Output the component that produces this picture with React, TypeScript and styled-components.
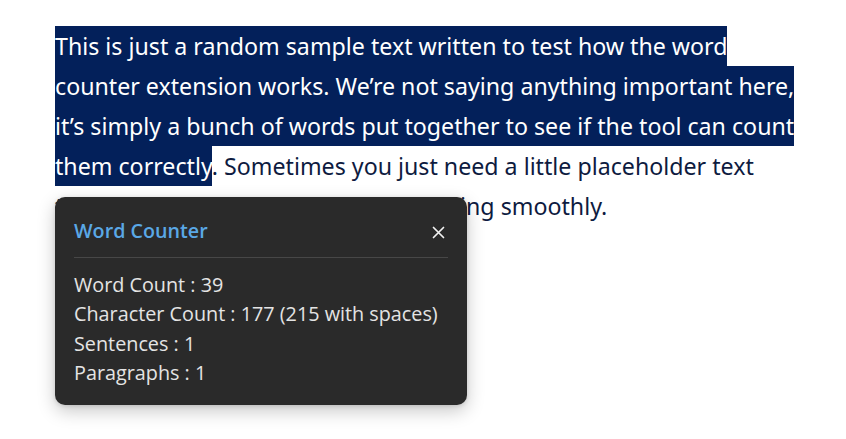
import React from 'react';
import styled, {createGlobalStyle} from "styled-components";

const GlobalStyle = createGlobalStyle`
    html, body {
        margin: 0;
        padding: 0;
        background: #ffffff;
    }
`

type StatType = {
    label: string
    value: string
}

const stats: StatType[] = [
    {label: 'Word Count', value: '39'},
    {label: 'Character Count', value: '177 (215 with spaces)'},
    {label: 'Sentences', value: '1'},
    {label: 'Paragraphs', value: '1'},
]

export default function App() {
    return (
        <>
            <GlobalStyle/>
            <StyledPage>
                <StyledText>
                    <StyledSelection>This is just a random sample text written to test how the word </StyledSelection><br/>
                    <StyledSelection>counter extension works. We’re not saying anything important here, </StyledSelection><br/>
                    <StyledSelection>it’s simply a bunch of words put together to see if the tool can count</StyledSelection><br/>
                    <StyledSelection>them correctly</StyledSelection>. Sometimes you just need a little placeholder text<br/>
                    to confirm that everything is functioning smoothly.
                </StyledText>

                <StyledPopup>
                    <StyledHeader>
                        <StyledTitle>Word Counter</StyledTitle>
                        <StyledClose aria-label="close">
                            <svg width="13" height="13" viewBox="0 0 13 13">
                                <path d="M1.5 1.5 L11.5 11.5 M11.5 1.5 L1.5 11.5" stroke="#f2f2f2" strokeWidth="1.7"
                                      strokeLinecap="round"/>
                            </svg>
                        </StyledClose>
                    </StyledHeader>
                    <StyledList>
                        {stats.map(s => (
                            <StyledRow key={s.label}>{s.label} : {s.value}</StyledRow>
                        ))}
                    </StyledList>
                </StyledPopup>
            </StyledPage>
        </>
    )
}

const StyledPage = styled.div`
    position: relative;
    width: 846px;
    height: 439px;
    padding: 26px 0 0 55px;
    box-sizing: border-box;
    overflow: hidden;
`

const StyledText = styled.p`
    margin: 0;
    font-family: "Noto Sans", sans-serif;
    font-size: 23.2px;
    line-height: 40px;
    color: #0e1b3f;
    white-space: nowrap;
`

const StyledSelection = styled.span`
    background-color: #03205a;
    color: #ffffff;
    padding: 4px 0 4px;
`

const StyledPopup = styled.div`
    position: absolute;
    left: 55px;
    top: 197px;
    width: 412px;
    height: 208px;
    box-sizing: border-box;
    padding: 13px 19px 0 19px;
    background-color: #2a2a2a;
    border-radius: 10px;
    box-shadow: 0 6px 18px rgba(0, 0, 0, 0.22), 0 1px 4px rgba(0, 0, 0, 0.12);
    font-family: "Open Sans", "Noto Sans", sans-serif;
`

const StyledHeader = styled.div`
    display: flex;
    align-items: center;
    justify-content: space-between;
    height: 40px;
    padding-bottom: 7px;
    border-bottom: 1px solid #474747;
`

const StyledTitle = styled.span`
    font-size: 19.7px;
    font-weight: 600;
    color: #5aa8e6;
`

const StyledClose = styled.button`
    display: flex;
    align-items: center;
    justify-content: center;
    width: 22px;
    height: 22px;
    margin: 4px -1px 0 0;
    padding: 0;
    background: transparent;
    border: none;
`

const StyledList = styled.div`
    display: flex;
    flex-direction: column;
    padding-top: 12px;
`

const StyledRow = styled.div`
    font-size: 19.8px;
    line-height: 29.3px;
    color: #e4e4e4;
`
